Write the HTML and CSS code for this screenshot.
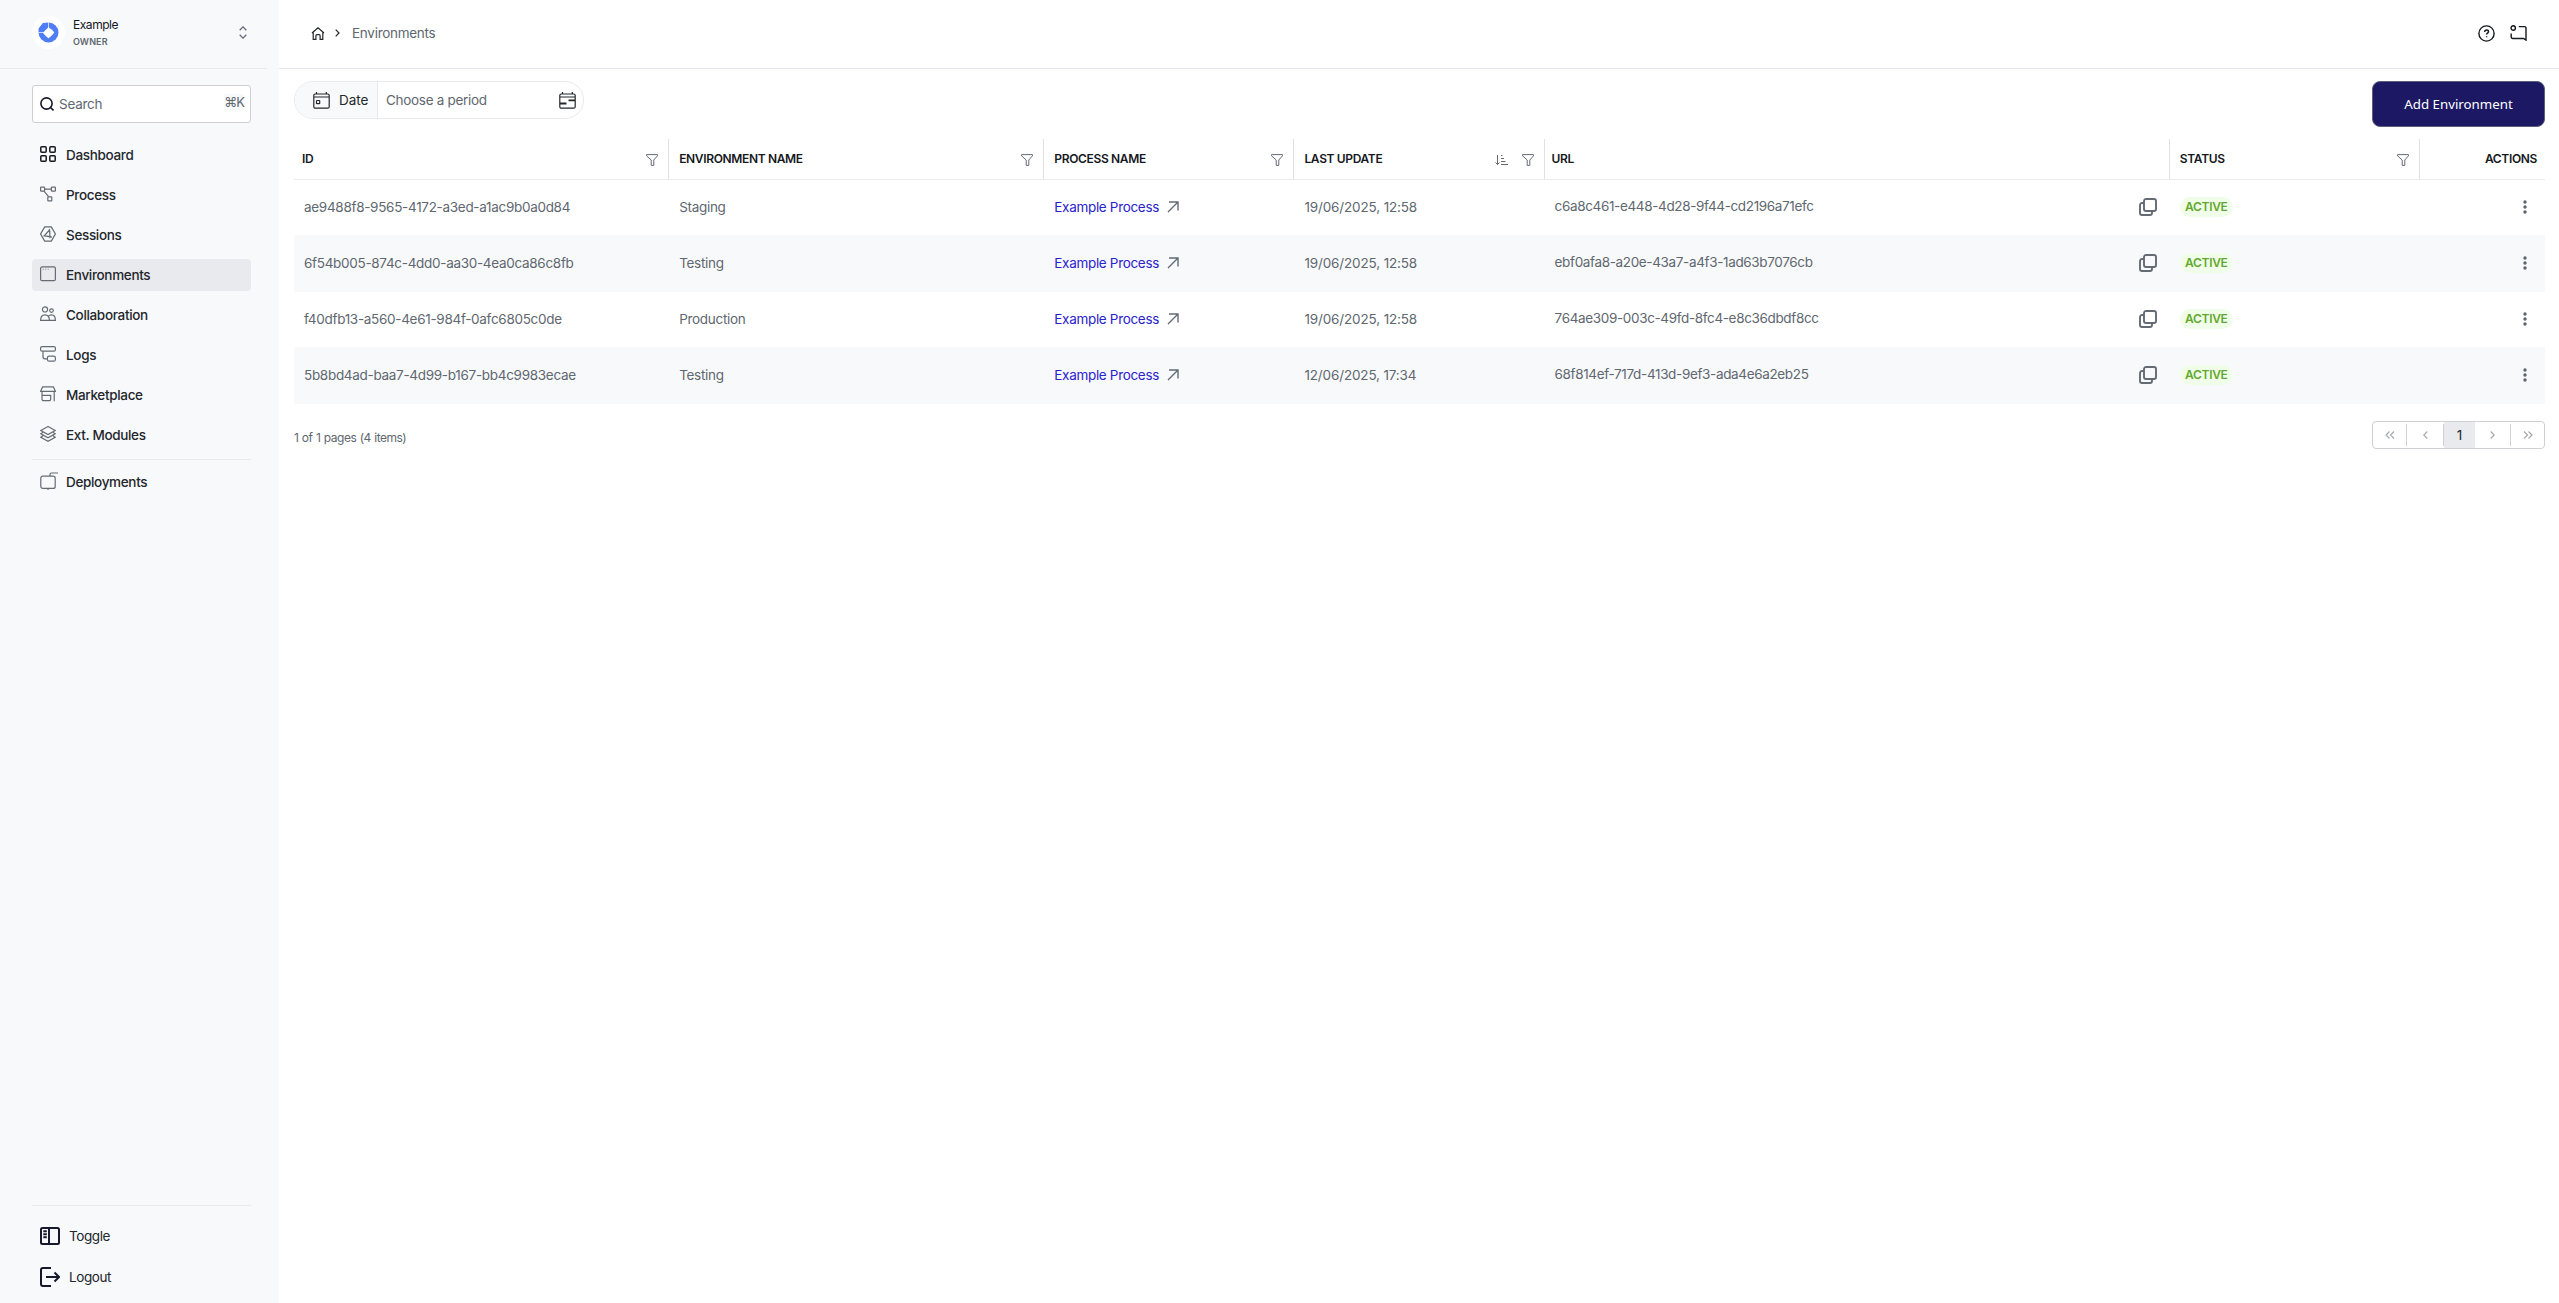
FILE: index.html
```html
<!DOCTYPE html>
<html lang="en">
<head>
    <meta charset="UTF-8">
    <meta name="viewport" content="width=device-width, initial-scale=1.0">
    <title>Environments</title>
    <link rel="stylesheet" href="styles.css">
</head>
<body>

    <svg class="sprite" aria-hidden="true">
        <symbol id="filter" viewBox="0 0 12 12"><path d="M.5.6h11v1.2L7.8 6v5.4H5.2V6L.5 1.8z"/></symbol>
        <symbol id="arrow" viewBox="0 0 12 12"><path d="M1 11 10.5 1.5M2 1h9v8.5"/></symbol>
        <symbol id="copy" viewBox="0 0 18 18"><rect x="5" y="1" width="12" height="12" rx="2"/><path d="M5 5H3a2 2 0 0 0-2 2v8a2 2 0 0 0 2 2h8a2 2 0 0 0 2-2v-2"/></symbol>
        <symbol id="dots" viewBox="0 0 4 14"><circle cx="2" cy="2" r="1.7"/><circle cx="2" cy="7" r="1.7"/><circle cx="2" cy="12" r="1.7"/></symbol>
    </svg>

    <aside class="sidebar">
        <div class="account">
            <span class="logo">
                <svg width="21" height="21" viewBox="0 0 21 21"><path d="M10.500.5a10 10 0 1 1-10 10L.6 6.500 4.800.9z" fill="#4f7df5"/><path d="M10.500 4.500c.7 1.500 1.500 2 3 2.800 1 .9 1.800 1.800 2.800 3.200-1 1.400-1.800 2.300-2.800 3.200-1 .9-1.800 1.700-3 2.600-1.200-.9-2-1.700-3-2.600-.9-1-1.600-1.900-2.800-3.200 1.200-.8 2-1.200 2.800-2.500 1.500-1 2.200-1.600 3-3.500z" fill="#fff"/><path d="M10.500 0v6M0 10.500h6" stroke="#e8eeff" stroke-width=".8"/></svg>
            </span>
            <div class="account-text">
                <span class="account-name">Example</span>
                <span class="account-role">OWNER</span>
            </div>
            <svg class="account-arrows" width="8" height="13" viewBox="0 0 8 13"><path d="M.7 4.200 4 .9l3.300 3.300M.7 8.800 4 12.100l3.300-3.300"/></svg>
        </div>

        <div class="search">
            <svg width="14" height="14" viewBox="0 0 14 14"><circle cx="6.500" cy="6.500" r="5.600"/><path d="m10.500 10.500 3 3"/></svg>
            <span class="search-label">Search</span>
            <span class="search-key">⌘K</span>
        </div>

        <nav class="menu">
            <a class="item">
                <svg class="dark" viewBox="0 0 16 16"><rect x=".8" y=".8" width="5.400" height="5.400" rx="1"/><rect x="9.800" y=".8" width="5.400" height="5.400" rx="1"/><rect x=".8" y="9.800" width="5.400" height="5.400" rx="1"/><rect x="9.800" y="9.800" width="5.400" height="5.400" rx="1"/></svg>
                Dashboard
            </a>
            <a class="item">
                <svg viewBox="0 0 16 16"><rect x=".6" y="1.200" width="4" height="4" rx=".6"/><rect x="11.400" y="1.200" width="4" height="4" rx=".6"/><rect x="7.800" y="10.800" width="4" height="4" rx=".6"/><path d="M4.600 3.200h6.800M4 5.200l4.800 5.600"/></svg>
                Process
            </a>
            <a class="item">
                <svg viewBox="0 0 16 16"><path d="M4.700.9h6.600L15.400 8l-4.100 7.100H4.700L.6 8z"/><path d="M9.500 4 4.200 9.800l5.800.9zM9.800 4.500v7.800M10 10.700l2 .4"/></svg>
                Sessions
            </a>
            <a class="item active">
                <svg viewBox="0 0 16 16"><rect x=".6" y=".9" width="14.800" height="13.800" rx="1.500"/><path d="M2.700 3.200h1M5.200 3.200h1M7.700 3.200h1" stroke-width=".8"/></svg>
                Environments
            </a>
            <a class="item">
                <svg viewBox="0 0 16 16"><circle cx="5" cy="3.400" r="2.600"/><circle cx="11.500" cy="4.600" r="1.800"/><path d="M.6 14.400c0-3.600 1.600-5.600 4.400-5.600s4.400 2 4.400 5.600zM8.400 10.100c.8-1 1.800-1.300 3.100-1.300 2.400 0 3.900 2 3.900 5.600h-6"/></svg>
                Collaboration
            </a>
            <a class="item">
                <svg viewBox="0 0 16 16"><rect x=".6" y=".6" width="14.800" height="4.600" rx="1.500"/><rect x="7.400" y="10.200" width="8" height="5" rx="1.800"/><path d="M3 5.200v5.600a2 2 0 0 0 2 2h2.400"/></svg>
                Logs
            </a>
            <a class="item">
                <svg viewBox="0 0 16 16"><path d="M2.600.8h10.800l2 4.600H.6zM2 5.600v7.600a1.500 1.500 0 0 0 1.500 1.500h5.700a1.500 1.500 0 0 0 1.500-1.500V9.400H2M14.200 5.600v9.600"/></svg>
                Marketplace
            </a>
            <a class="item">
                <svg viewBox="0 0 16 16"><path d="m8 .6 7.200 4L8 8.600.8 4.600zM3 6.400.8 7.800 8 11.800l7.200-4L13 6.400M3 9.800l-2.200 1.400L8 15.200l7.200-4L13 9.800"/></svg>
                Ext. Modules
            </a>
            <hr class="rule">
            <a class="item">
                <svg class="wide" viewBox="0 0 18 18"><rect x=".8" y="4.200" width="14.400" height="12.200" rx="2"/><path d="M10 4V2.400A1.400 1.400 0 0 1 11.400 1H18M8 16.400V18"/></svg>
                Deployments
            </a>
        </nav>

        <div class="bottom">
            <hr class="rule">
            <a class="foot">
                <svg width="20" height="20" viewBox="0 0 20 20"><rect x="1" y="2" width="18" height="16" rx="1.500"/><path d="M9 2v16M3.300 5.200h3.500M3.300 8.200h3.500M3.300 11.200h3.500"/></svg>
                Toggle
            </a>
            <a class="foot">
                <svg width="20" height="20" viewBox="0 0 20 20"><path d="M11 1H3a2 2 0 0 0-2 2v14a2 2 0 0 0 2 2h8M6 10h13M14.500 5.500 19 10l-4.500 4.500"/></svg>
                Logout
            </a>
        </div>
    </aside>

    <main class="main">
        <header class="topbar">
            <div class="crumbs">
                <svg width="14" height="13" viewBox="0 0 14 13"><path d="M1 6 7 .8 13 6M2.200 5v7.300h2.700V8.600a1 1 0 0 1 1-1h2.200a1 1 0 0 1 1 1v3.700h2.700V5"/></svg>
                <svg class="sep" width="5" height="8" viewBox="0 0 5 8"><path d="m.7.6 3.300 3.400L.7 7.400"/></svg>
                <span>Environments</span>
            </div>
            <div class="top-icons">
                <svg width="17" height="17" viewBox="0 0 17 17"><circle cx="8.500" cy="8.500" r="7.600"/><path d="M6.700 6.900c0-1.200.8-1.900 1.900-1.900s1.900.7 1.900 1.700c0 1.300-1.900 1.500-1.900 2.700M8.600 11.200v1"/></svg>
                <svg width="17" height="16" viewBox="0 0 17 16"><circle cx="3.200" cy="3" r="2.200"/><path d="M8.800 1.600h5.700a1.500 1.500 0 0 1 1.500 1.500v12l-2.400-1.600H2.700a1.500 1.500 0 0 1-1.500-1.500V8.600"/></svg>
            </div>
        </header>

        <div class="toolbar">
            <div class="period">
                <div class="period-label">
                    <svg width="17" height="17" viewBox="0 0 17 17"><rect x=".8" y="2" width="15.400" height="14.200" rx="1.500"/><path d="M1 5h15M3.500 0v2M13.300 0v2"/><rect x="3.500" y="8.500" width="3.200" height="3.200" rx=".5"/></svg>
                    <span>Date</span>
                </div>
                <div class="period-value">
                    <span>Choose a period</span>
                    <svg width="17" height="17" viewBox="0 0 17 17"><rect x=".8" y="2" width="15.400" height="14.200" rx="1.500"/><path d="M1 5h15M3.500 0v2M13.300 0v2"/><path d="M9.500 8.300H16M1 11.500h6.500" stroke-width="1.800"/></svg>
                </div>
            </div>
            <button class="add">Add Environment</button>
        </div>

        <div class="table">
            <div class="row head">
                <div class="th first">ID<svg class="funnel"><use href="#filter"/></svg></div>
                <div class="th">ENVIRONMENT NAME<svg class="funnel"><use href="#filter"/></svg></div>
                <div class="th">PROCESS NAME<svg class="funnel"><use href="#filter"/></svg></div>
                <div class="th">LAST UPDATE
                    <svg class="sort" width="13" height="12" viewBox="0 0 13 12"><path d="M2.500 1v9.500M.5 8.500l2 2 2-2M6 1.500h1.500M6 4.500h3M6 7.500h4.500M6 10.500h7"/></svg>
                    <svg class="funnel"><use href="#filter"/></svg>
                </div>
                <div class="th url">URL</div>
                <div class="th">STATUS<svg class="funnel"><use href="#filter"/></svg></div>
                <div class="th last">ACTIONS</div>
            </div>
            <div id="rows"></div>
        </div>

        <div class="footer">
            <span class="count">1 of 1 pages (4 items)</span>
            <div class="pager">
                <span class="page"><svg width="10" height="8" viewBox="0 0 10 8"><path d="M4.500.5 1 4l3.500 3.500M9 .5 5.500 4 9 7.500"/></svg></span>
                <span class="page"><svg width="5" height="8" viewBox="0 0 5 8"><path d="M4.300.5.800 4l3.500 3.500"/></svg></span>
                <span class="page current">1</span>
                <span class="page"><svg width="5" height="8" viewBox="0 0 5 8"><path d="M.7.5 4.200 4 .7 7.500"/></svg></span>
                <span class="page"><svg width="10" height="8" viewBox="0 0 10 8"><path d="M1 .5 4.500 4 1 7.500M5.500.5 9 4 5.500 7.500"/></svg></span>
            </div>
        </div>
    </main>

    <script>
        const environments = [
            { id: "ae9488f8-9565-4172-a3ed-a1ac9b0a0d84", name: "Staging", date: "19/06/2025, 12:58", url: "c6a8c461-e448-4d28-9f44-cd2196a71efc" },
            { id: "6f54b005-874c-4dd0-aa30-4ea0ca86c8fb", name: "Testing", date: "19/06/2025, 12:58", url: "ebf0afa8-a20e-43a7-a4f3-1ad63b7076cb" },
            { id: "f40dfb13-a560-4e61-984f-0afc6805c0de", name: "Production", date: "19/06/2025, 12:58", url: "764ae309-003c-49fd-8fc4-e8c36dbdf8cc" },
            { id: "5b8bd4ad-baa7-4d99-b167-bb4c9983ecae", name: "Testing", date: "12/06/2025, 17:34", url: "68f814ef-717d-413d-9ef3-ada4e6a2eb25" }
        ];

        document.getElementById("rows").innerHTML = environments.map(env => `
            <div class="row">
                <div class="td id">${env.id}</div>
                <div class="td">${env.name}</div>
                <div class="td process"><a>Example Process</a><svg class="arrow"><use href="#arrow"/></svg></div>
                <div class="td date">${env.date}</div>
                <div class="td link"><span>${env.url}</span><svg class="copy"><use href="#copy"/></svg></div>
                <div class="td"><span class="badge">ACTIVE</span></div>
                <div class="td more"><svg class="dots"><use href="#dots"/></svg></div>
            </div>
        `).join("");
    </script>

</body>
</html>
```
FILE: styles.css
```css
* {
    box-sizing: border-box;
}
body {
    margin: 0;
    display: flex;
    height: 100vh;
    overflow: hidden;
    font-family: Inter, "Liberation Sans", sans-serif;
    font-size: 13.5px;
    color: #60676f;
    background: #fff;
}
svg {
    flex: none;
    fill: none;
    stroke: #646b74;
}
.sprite {
    position: absolute;
    width: 0;
    height: 0;
}
/* sidebar */
.sidebar {
    width: 279px;
    flex: none;
    display: flex;
    flex-direction: column;
    background: #f8f9fb;
}
.account {
    width: 267px;
    height: 69px;
    padding: 1px 20px 4px 32px;
    display: flex;
    align-items: center;
    border-bottom: 1px solid #e9eaed;
}
.logo {
    width: 33px;
    height: 33px;
    display: flex;
    align-items: center;
    justify-content: center;
    border-radius: 50%;
    background: #fff;
}
.logo svg {
    stroke: none;
}
.account-text {
    flex: 1;
    margin-left: 8px;
    display: flex;
    flex-direction: column;
    gap: 3px;
}
.account-name {
    font-size: 12px;
    line-height: 15px;
    letter-spacing: -0.45px;
    color: #15181d;
}
.account-role {
    font-size: 9px;
    line-height: 14px;
    font-weight: 600;
    letter-spacing: 0.1px;
}
.account-arrows {
    stroke-width: 1.3;
}
.search {
    width: 219px;
    height: 38px;
    margin: 16px 0 0 32px;
    padding: 0 6px 0 7px;
    display: flex;
    align-items: center;
    border: 1px solid #ced0d4;
    border-radius: 3px;
    background: #fff;
}
.search svg {
    stroke: #15192b;
    stroke-width: 1.6;
}
.search-label {
    flex: 1;
    margin-left: 5px;
    letter-spacing: -0.25px;
}
.search-key {
    margin-bottom: 4px;
    font-size: 13px;
    letter-spacing: -1px;
    background: #f8f9fb;
}
.menu {
    width: 219px;
    margin: 16px 0 0 32px;
    display: flex;
    flex-direction: column;
    gap: 8px;
}
.item {
    height: 32px;
    padding-left: 8px;
    display: flex;
    align-items: center;
    gap: 10px;
    border-radius: 4px;
    font-weight: 500;
    letter-spacing: -0.33px;
    color: #23262b;
}
.item svg {
    width: 16px;
    height: 16px;
    margin-bottom: 2px;
    stroke-width: 1.2;
}
.item svg.dark {
    stroke: #15181d;
    stroke-width: 1.5;
}
.item svg.wide {
    width: 18px;
    height: 18px;
    margin-right: -2px;
}
.active {
    background: #e9eaee;
}
.rule {
    width: 100%;
    height: 1px;
    margin: 0;
    border: 0;
    background: #e9eaed;
}
.menu .rule {
    margin-bottom: -2px;
}
.bottom {
    width: 219px;
    margin: auto 0 6px 32px;
}
.foot {
    height: 41px;
    padding-left: 8px;
    display: flex;
    align-items: center;
    gap: 9px;
    letter-spacing: -0.4px;
    color: #23262b;
}
.bottom .rule {
    margin-bottom: 9px;
}
.foot svg {
    stroke: #15192b;
    stroke-width: 2;
}
/* main */
.main {
    flex: 1;
    min-width: 0;
}
.topbar {
    height: 69px;
    padding: 0 32px 2px 32px;
    display: flex;
    align-items: center;
    justify-content: space-between;
    border-bottom: 1px solid #e6e7ec;
}
.crumbs {
    display: flex;
    align-items: center;
    letter-spacing: -0.28px;
}
.crumbs svg {
    stroke: #23262b;
    stroke-width: 1.2;
}
.crumbs .sep {
    margin: 0 12px 0 10px;
}
.top-icons {
    display: flex;
    align-items: center;
    gap: 15px;
}
.top-icons svg {
    stroke: #15181d;
    stroke-width: 1.4;
}
.toolbar {
    height: 58px;
    margin-top: 12px;
    padding: 0 14px 0 15px;
    display: flex;
    align-items: flex-start;
    justify-content: space-between;
}
.period {
    width: 290px;
    height: 38px;
    display: flex;
    border: 1px solid #e9eaee;
    border-radius: 19px;
    overflow: hidden;
}
.period svg {
    stroke: #23262b;
    stroke-width: 1.2;
}
.period-label {
    width: 83px;
    padding-left: 18px;
    display: flex;
    align-items: center;
    gap: 9px;
    border-right: 1px solid #e9eaee;
    background: #f8f9fb;
    color: #23262b;
}
.period-value {
    flex: 1;
    padding: 0 7px 0 8px;
    display: flex;
    align-items: center;
    justify-content: space-between;
    letter-spacing: -0.3px;
}
.add {
    width: 173px;
    height: 46px;
    padding: 0 0 1px;
    border: 1px solid #5c5f78;
    border-radius: 8px;
    background: #1d1863;
    color: #fff;
    font-family: "Noto Sans", sans-serif;
    font-size: 13.3px;
}
/* table */
.table {
    margin: 0 14px 0 15px;
}
.row {
    display: grid;
    grid-template-columns: 3fr 3fr 2fr 2fr 5fr 2fr 1fr;
    height: 55px;
}
.row:nth-child(even) {
    height: 57px;
    background: #f8f9fb;
}
.head {
    height: 41px;
    border-bottom: 1px solid #e9eaed;
}
.th {
    padding: 0 10px 1px;
    display: flex;
    align-items: center;
    border-right: 1px solid #dfe1e5;
    font-size: 12px;
    font-weight: 600;
    letter-spacing: -0.35px;
    color: #15181d;
}
.th.first {
    padding-left: 8px;
}
.th.url {
    padding-left: 7px;
}
.th.last {
    padding-right: 8px;
    justify-content: flex-end;
    border-right: 0;
}
.funnel {
    width: 12px;
    height: 12px;
    margin: 3px 0 0 auto;
}
.sort {
    margin: 3px 14px 0 auto;
}
.sort + .funnel {
    margin-left: 0;
}
.td {
    padding: 0 0 1px 10px;
    display: flex;
    align-items: center;
    letter-spacing: -0.3px;
}
.date {
    letter-spacing: -0.15px;
}
.process {
    letter-spacing: -0.32px;
}
.process a {
    color: #2a22cc;
}
.arrow {
    width: 12px;
    height: 12px;
    margin-left: 8px;
    stroke-width: 1.4;
}
.link {
    padding: 0 13px 2px 10px;
    justify-content: space-between;
    letter-spacing: -0.35px;
}
.link span {
    margin-bottom: 1px;
}
.copy {
    width: 18px;
    height: 18px;
    stroke-width: 1.9;
}
.badge {
    width: 53px;
    height: 20px;
    border-radius: 10px;
    background: #f0fde8;
    color: #63a82e;
    font-size: 12px;
    font-weight: 600;
    line-height: 20px;
    text-align: center;
}
.more {
    padding-right: 18px;
    justify-content: flex-end;
}
.dots {
    width: 4px;
    height: 14px;
    fill: #5c636c;
    stroke: none;
}
.footer {
    margin: 17px 14px 0 15px;
    display: flex;
    justify-content: space-between;
}
.count {
    margin-top: 9px;
    font-size: 12px;
    line-height: 16px;
    letter-spacing: -0.5px;
    word-spacing: 0.6px;
}
.pager {
    width: 173px;
    height: 28px;
    display: grid;
    grid-template-columns: 34px 37px 31px 36px 1fr;
    align-items: center;
    border: 1px solid #ced0d4;
    border-radius: 4px;
}
.page {
    height: 22px;
    display: flex;
    align-items: center;
    justify-content: center;
    border-right: 1px solid #ced0d4;
}
.page.current {
    height: 26px;
    border: 0;
    background: #e9eaee;
    color: #23262b;
}
.page svg {
    stroke: #a4a9b0;
    stroke-width: 1.2;
}
.page:last-child {
    border-right: 0;
}
```
